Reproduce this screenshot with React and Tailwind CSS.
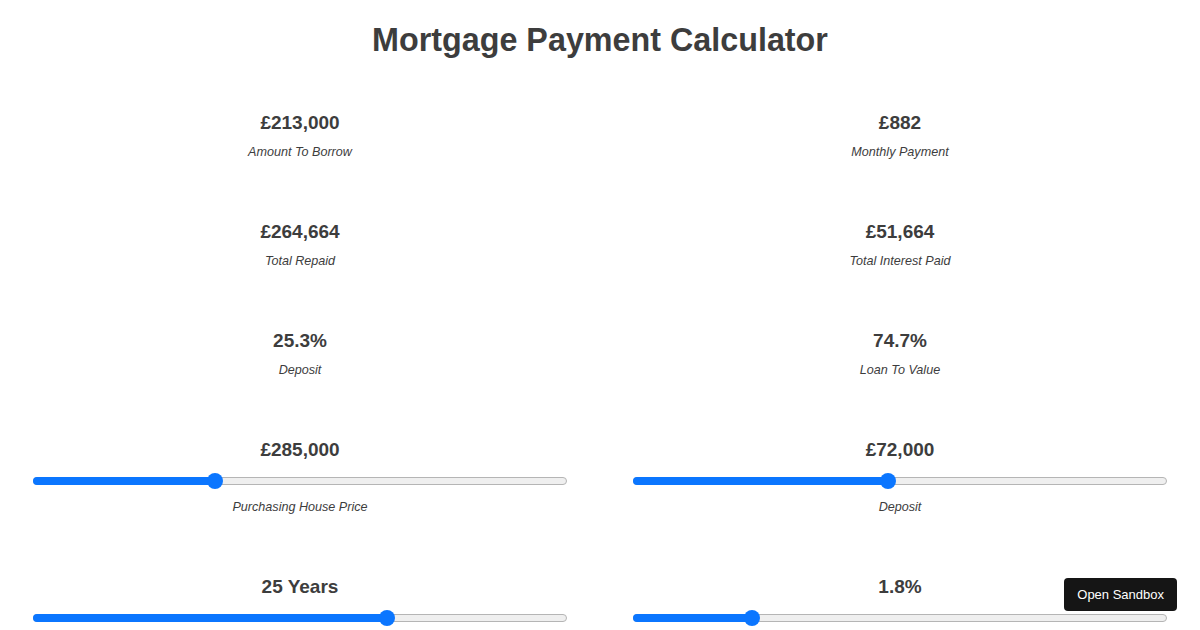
import React from "react";

function Slider({ frac }) {
  return (
    <div className="relative mx-[33px] h-[8px] mt-[15px]">
      <div className="absolute inset-0 rounded-full bg-[#efefef] border border-[#b5b5b5]" />
      <div
        className="absolute left-0 top-0 h-[8px] rounded-full bg-[#0b76ff]"
        style={{ width: `${frac * 100}%` }}
      />
      <div
        className="absolute top-[-4px] w-[16px] h-[16px] rounded-full bg-[#0b76ff] -ml-[8px]"
        style={{ left: `${frac * 100}%` }}
      />
    </div>
  );
}

function Stat({ value, label }) {
  return (
    <div className="h-[109px] text-center">
      <div className="text-[19px] leading-[24px] font-bold">{value}</div>
      <div className="mt-[9px] text-[12.6px] leading-[16px] italic">{label}</div>
    </div>
  );
}

function SliderStat({ value, label, frac }) {
  return (
    <div className="h-[137px] text-center">
      <div className="text-[19px] leading-[24px] font-bold">{value}</div>
      <Slider frac={frac} />
      {label ? (
        <div className="mt-[14px] text-[12.6px] leading-[16px] italic">{label}</div>
      ) : null}
    </div>
  );
}

export default function App() {
  return (
    <div
      className="w-[1200px] h-[630px] overflow-hidden bg-white text-[#3d3d3d]"
      style={{ fontFamily: '"Liberation Sans", Arial, sans-serif' }}
    >
      <h1 className="mt-[20px] h-[40px] text-center text-[32.3px] leading-[40px] font-bold">
        Mortgage Payment Calculator
      </h1>
      <div className="mt-[51px] grid grid-cols-2">
        <Stat value="£213,000" label="Amount To Borrow" />
        <Stat value="£882" label="Monthly Payment" />
        <Stat value="£264,664" label="Total Repaid" />
        <Stat value="£51,664" label="Total Interest Paid" />
        <Stat value="25.3%" label="Deposit" />
        <Stat value="74.7%" label="Loan To Value" />
        <SliderStat value="£285,000" label="Purchasing House Price" frac={0.341} />
        <SliderStat value="£72,000" label="Deposit" frac={0.478} />
        <SliderStat value="25 Years" frac={0.663} />
        <SliderStat value="1.8%" frac={0.223} />
      </div>
      <button className="fixed right-[23px] bottom-[19px] h-[33px] px-[13px] rounded-[4px] bg-[#151515] text-white text-[13px]">
        Open Sandbox
      </button>
    </div>
  );
}
